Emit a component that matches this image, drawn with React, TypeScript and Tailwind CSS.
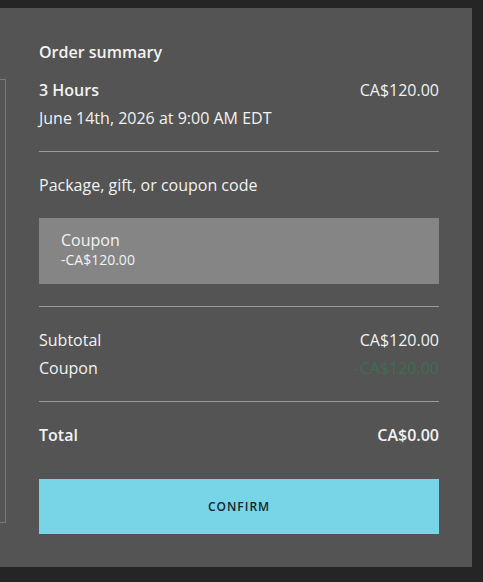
export default function App() {
  return (
    <div className="min-h-screen bg-[#252525] pt-[8px] font-['Open_Sans',sans-serif] text-[#f2f2f2]">
      <div className="flex w-[472px] h-[559px] bg-[#535453]">
        <div className="w-[6px] h-[444px] mt-[71px] border-y border-r border-[#777877]" />
        <div className="ml-[33px] w-[400px] pt-[32px]">
          <h2 className="text-[16px] leading-[24px] font-semibold">Order summary</h2>

          <div className="mt-[14px] flex justify-between text-[16px] leading-[24px]">
            <span className="font-semibold">3 Hours</span>
            <span>CA$120.00</span>
          </div>
          <div className="mt-[4px] text-[16px] leading-[24px]">June 14th, 2026 at 9:00 AM EDT</div>

          <div className="mt-[21px] border-t border-[#9a9b9a]" />

          <div className="mt-[21px] text-[16px] leading-[24px]">Package, gift, or coupon code</div>

          <div className="mt-[21px] h-[66px] bg-[#858585] px-[22px] pt-[11px]">
            <div className="text-[16px] leading-[22px]">Coupon</div>
            <div className="text-[14px] leading-[17px]">-CA$120.00</div>
          </div>

          <div className="mt-[22px] border-t border-[#9a9b9a]" />

          <div className="mt-[19px] flex justify-between text-[16px] leading-[28px]">
            <span>Subtotal</span>
            <span>CA$120.00</span>
          </div>
          <div className="flex justify-between text-[16px] leading-[28px]">
            <span>Coupon</span>
            <span className="text-[#3f6d52]">-CA$120.00</span>
          </div>

          <div className="mt-[19px] border-t border-[#9a9b9a]" />

          <div className="mt-[21px] flex justify-between text-[16px] leading-[24px] font-semibold">
            <span>Total</span>
            <span>CA$0.00</span>
          </div>

          <button className="mt-[32px] w-full h-[55px] bg-[#78d5e7] text-[#14252b] text-[12px] font-semibold tracking-[1px]">
            CONFIRM
          </button>
        </div>
      </div>
    </div>
  );
}
